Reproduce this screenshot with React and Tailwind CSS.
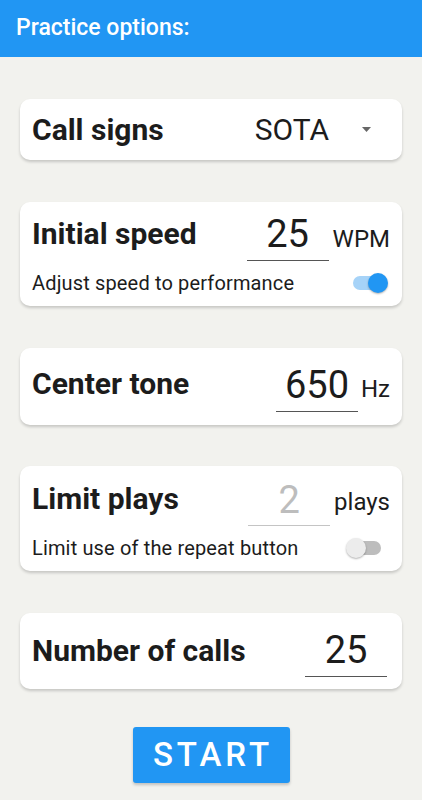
export default function App() {
  const Toggle = ({ on }) =>
    on ? (
      <div className="relative w-[35px] h-[20px] flex items-center">
        <div className="w-[34px] h-[14px] rounded-full bg-[#a6d3f8]" />
        <div className="absolute right-0 top-0 w-[20px] h-[20px] rounded-full bg-[#2196f3] shadow-[0_1px_2px_rgba(0,0,0,0.3)]" />
      </div>
    ) : (
      <div className="relative w-[35px] h-[20px] flex items-center justify-end">
        <div className="w-[33px] h-[14px] rounded-full bg-[#bdbdbd]" />
        <div className="absolute left-0 top-0 w-[20px] h-[20px] rounded-full bg-[#ececec] shadow-[0_1px_2px_rgba(0,0,0,0.3)]" />
      </div>
    );

  const card = "bg-white rounded-[10px] shadow-[0_2px_3px_rgba(0,0,0,0.18)] px-3";
  const label = "text-[30px] leading-[35px] font-bold text-[#1c1c1c]";
  const num = "w-[82px] text-center text-[38px] leading-[44px] text-[#1c1c1c] border-b border-[#555]";
  const unit = "text-[24px] leading-[28px] text-[#1c1c1c]";
  const sub = "text-[20px] leading-[22px] tracking-[0.15px] text-[#1c1c1c]";

  return (
    <div className="min-h-[800px] bg-[#f2f2ee] font-['Roboto',sans-serif]">
      <header className="h-[57px] bg-[#2196f3] px-4 flex items-center text-[23px] font-medium text-white">
        Practice options:
      </header>
      <main className="px-5 pt-[42px] flex flex-col">
        {/* Call signs */}
        <div className={`${card} h-[61px] flex items-center`}>
          <div className={label}>Call signs</div>
          <div className="ml-auto flex items-center">
            <span className="text-[30px] leading-[35px] text-[#1c1c1c]">SOTA</span>
            <svg width="9" height="5" viewBox="0 0 9 5" className="ml-[33px] mr-[19px]">
              <polygon points="0,0 9,0 4.5,5" fill="#666" />
            </svg>
          </div>
        </div>

        {/* Initial speed */}
        <div className={`${card} mt-[42px] h-[104px] pt-[10px] flex flex-col`}>
          <div className="flex items-end">
            <div className={`${label} mb-[10px]`}>Initial speed</div>
            <div className={`${num} ml-auto pb-[4px]`}>25</div>
            <div className={`${unit} ml-[4px] mb-[8px]`}>WPM</div>
          </div>
          <div className="flex items-center mt-[11px]">
            <div className={sub}>Adjust speed to performance</div>
            <div className="ml-auto mr-[2px]">
              <Toggle on />
            </div>
          </div>
        </div>

        {/* Center tone */}
        <div className={`${card} mt-[42px] h-[77px] pt-[15px] flex flex-col`}>
          <div className="flex items-end">
            <div className={`${label} mb-[11px]`}>Center tone</div>
            <div className={`${num} ml-auto pb-[4px]`}>650</div>
            <div className={`${unit} ml-[3px] mb-[9px]`}>Hz</div>
          </div>
        </div>

        {/* Limit plays */}
        <div className={`${card} mt-[41px] h-[105px] pt-[12px] flex flex-col`}>
          <div className="flex items-end">
            <div className={`${label} mb-[10px]`}>Limit plays</div>
            <div className="w-[82px] text-center text-[38px] leading-[44px] text-[#bdbdbd] border-b border-[#c4c4c4] ml-auto pb-[3px]">
              2
            </div>
            <div className={`${unit} ml-[4px] mb-[10px]`}>plays</div>
          </div>
          <div className="flex items-center mt-[11px]">
            <div className={sub}>Limit use of the repeat button</div>
            <div className="ml-auto mr-[9px]">
              <Toggle on={false} />
            </div>
          </div>
        </div>

        {/* Number of calls */}
        <div className={`${card} mt-[42px] h-[76px] pt-[15px] flex flex-col`}>
          <div className="flex items-end">
            <div className={`${label} mb-[9px]`}>Number of calls</div>
            <div className={`${num} ml-auto mr-[3px] pb-[4px]`}>25</div>
          </div>
        </div>

        <button className="mt-[38px] mx-auto w-[157px] h-[56px] bg-[#2196f3] rounded-[3px] text-white text-[33px] font-medium tracking-[4px] pl-[4px] shadow-[0_2px_3px_rgba(0,0,0,0.2)] flex items-center justify-center">
          START
        </button>
      </main>
    </div>
  );
}
